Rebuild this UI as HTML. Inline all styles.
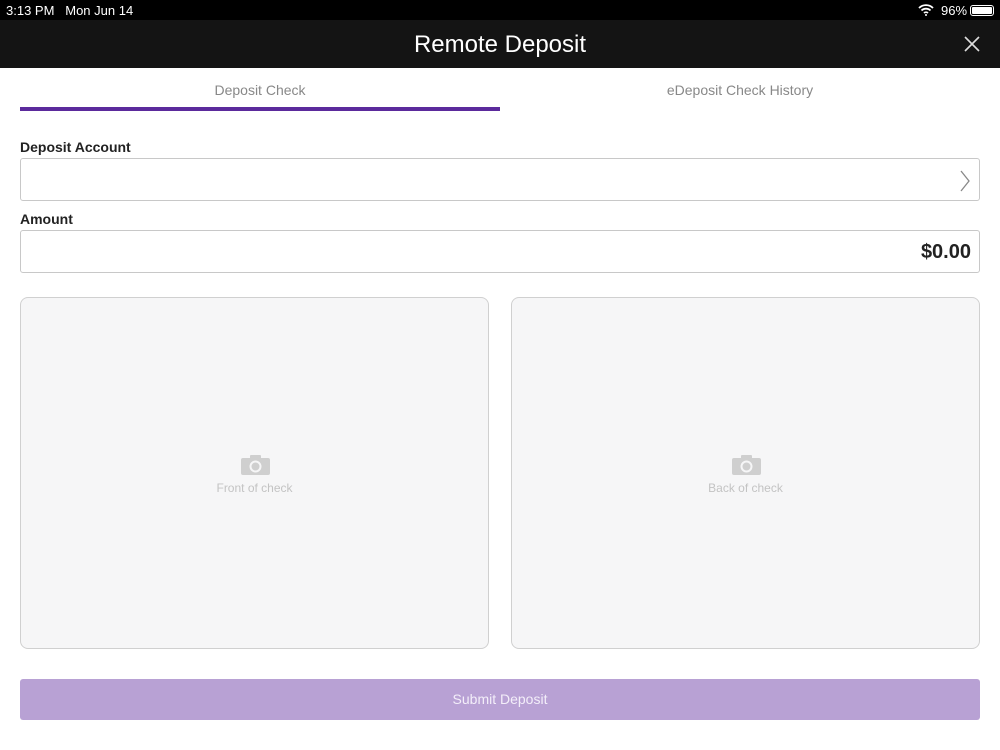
<!DOCTYPE html>
<html><head><style>
*{margin:0;padding:0;box-sizing:border-box}
body{width:1000px;height:750px;background:#fff;font-family:"Liberation Sans",sans-serif;position:relative;overflow:hidden}
.abs{position:absolute}
.status{top:0;left:0;width:1000px;height:20px;background:#000;color:#fff;font-size:13px}
.nav{top:20px;left:0;width:1000px;height:48px;background:#141414;color:#fff}
.lbl{font-size:14px;font-weight:bold;color:#222}
.field{border:1px solid #c8c8c8;border-radius:3px;background:#fff}
.box{border:1px solid #d0d0d0;border-radius:8px;background:#f6f6f7}
.cap{font-size:12px;color:#c3c3c3;text-align:center;width:100%}
</style></head><body>
<div class="abs status">
<span class="abs" style="left:6px;top:3px">3:13 PM&nbsp;&nbsp; Mon Jun 14</span>
<span class="abs" style="left:941px;top:3px">96%</span>
<svg class="abs" style="left:918px;top:4px" width="16" height="12" viewBox="0 0 16 12"><path d="M1 4a10 10 0 0 1 14 0M3.5 6.5a6.5 6.5 0 0 1 9 0M6 9a3 3 0 0 1 4 0" stroke="#fff" stroke-width="1.8" fill="none"/><circle cx="8" cy="11" r="1" fill="#fff"/></svg>
<div class="abs" style="left:970px;top:5px;width:24px;height:11px;border:1px solid #fff;border-radius:3px;padding:1px"><div style="background:#fff;width:100%;height:100%;border-radius:1px"></div></div>
</div>
<div class="abs nav">
<div class="abs" style="left:0;width:1000px;top:11px;text-align:center;font-size:24px">Remote Deposit</div>
<svg class="abs" style="left:964px;top:16px" width="16" height="16"><path d="M1 1L15 15M15 1L1 15" stroke="#ddd" stroke-width="1.6"/></svg>
</div>
<div class="abs" style="left:20px;width:480px;top:82px;text-align:center;font-size:14px;color:#888">Deposit Check</div>
<div class="abs" style="left:500px;width:480px;top:82px;text-align:center;font-size:14px;color:#888">eDeposit Check History</div>
<div class="abs" style="left:20px;top:107px;width:480px;height:4px;background:#5b2a9c"></div>
<div class="abs lbl" style="left:20px;top:139px">Deposit Account</div>
<div class="abs field" style="left:20px;top:158px;width:960px;height:43px">
<svg class="abs" style="left:938px;top:11px" width="12" height="22"><path d="M2 1L10 11L2 21" stroke="#888" stroke-width="1.3" fill="none"/></svg></div>
<div class="abs lbl" style="left:20px;top:211px">Amount</div>
<div class="abs field" style="left:20px;top:230px;width:960px;height:43px">
<span class="abs" style="right:8px;top:10px;font-size:20px;font-weight:bold;color:#222">$0.00</span></div>
<div class="abs box" style="left:20px;top:297px;width:469px;height:352px">
<svg class="abs" style="left:220px;top:157px" width="29" height="20"><rect x="0" y="3" width="29" height="17" rx="2" fill="#cfcfcf"/><rect x="9" y="0" width="11" height="5" rx="1" fill="#cfcfcf"/><circle cx="14.5" cy="11.5" r="5" fill="none" stroke="#f6f6f7" stroke-width="2"/></svg>
<div class="abs cap" style="top:183px">Front of check</div></div>
<div class="abs box" style="left:511px;top:297px;width:469px;height:352px">
<svg class="abs" style="left:220px;top:157px" width="29" height="20"><rect x="0" y="3" width="29" height="17" rx="2" fill="#cfcfcf"/><rect x="9" y="0" width="11" height="5" rx="1" fill="#cfcfcf"/><circle cx="14.5" cy="11.5" r="5" fill="none" stroke="#f6f6f7" stroke-width="2"/></svg>
<div class="abs cap" style="top:183px">Back of check</div></div>
<div class="abs" style="left:20px;top:679px;width:960px;height:41px;background:#b8a1d4;border-radius:3px;color:#f3eef9;font-size:14px;text-align:center;line-height:41px">Submit Deposit</div>
</body></html>
